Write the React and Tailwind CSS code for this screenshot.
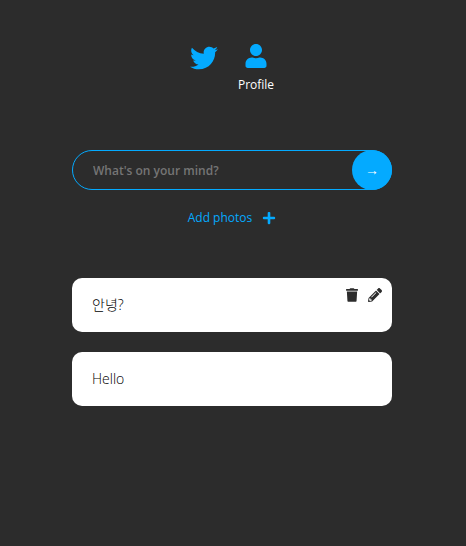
import { useState } from "react";
import { FaPencilAlt, FaPlus, FaTrash, FaTwitter, FaUser } from "react-icons/fa";

const posts = [
  { id: 1, text: "안녕?", mine: true },
  { id: 2, text: "Hello", mine: false },
];

function Navigation() {
  return (
    <nav>
      <ul className="flex justify-center gap-5">
        <li>
          <a href="#home" aria-label="Home" className="block text-[#04aaff]">
            <FaTwitter size={28} />
          </a>
        </li>
        <li>
          <a href="#profile" className="flex flex-col items-center gap-[9px] text-xs font-medium text-white">
            <FaUser size={24} className="text-[#04aaff]" />
            <span>Profile</span>
          </a>
        </li>
      </ul>
    </nav>
  );
}

function PostForm() {
  const [text, setText] = useState("");
  return (
    <form onSubmit={(event) => event.preventDefault()} className="flex flex-col items-center">
      <div className="relative w-full">
        <input
          type="text"
          aria-label="What's on your mind?"
          placeholder="What's on your mind?"
          value={text}
          onChange={(event) => setText(event.target.value)}
          className="block h-10 w-full rounded-full border border-[#04aaff] bg-transparent pr-12 pl-5 text-xs font-semibold text-white outline-none placeholder:text-[#757575]"
        />
        <button
          type="submit"
          aria-label="Post"
          className="absolute top-0 right-0 flex size-10 items-center justify-center rounded-full bg-[#04aaff] text-white"
        >
          <span className="font-['Liberation_Sans',sans-serif] text-sm font-bold">→</span>
        </button>
      </div>
      <label htmlFor="photos" className="mt-5 flex cursor-pointer items-center gap-2.5 text-xs text-[#04aaff]">
        <span>Add photos</span>
        <FaPlus size={14} />
      </label>
      <input id="photos" type="file" accept="image/*" className="sr-only" />
    </form>
  );
}

function Post({ text, mine }) {
  return (
    <li className="relative rounded-[10px] bg-white p-5 text-sm leading-[14px] font-light text-black">
      <p>{text}</p>
      {mine && (
        <div className="absolute top-2.5 right-2.5 flex gap-2.5 text-[#2c2c2c]">
          <button type="button" aria-label="Delete post">
            <FaTrash size={14} className="w-3" />
          </button>
          <button type="button" aria-label="Edit post">
            <FaPencilAlt size={14} />
          </button>
        </div>
      )}
    </li>
  );
}

export default function App() {
  return (
    <div className="min-h-screen bg-[#2c2c2c] pt-11 pr-0.5 font-['Open_Sans','Noto_Sans_CJK_KR',sans-serif]">
      <div className="mx-auto flex w-full max-w-80 flex-col">
        <Navigation />
        <main className="mt-[57px]">
          <PostForm />
          <ul className="mt-[52px] flex flex-col gap-5">
            {posts.map((post) => (
              <Post key={post.id} text={post.text} mine={post.mine} />
            ))}
          </ul>
        </main>
      </div>
    </div>
  );
}
